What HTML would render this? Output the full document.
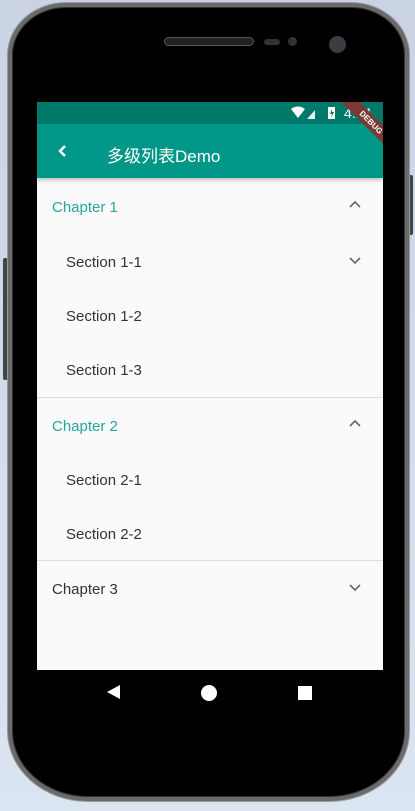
<!DOCTYPE html>
<html><head><meta charset="utf-8"><style>
*{margin:0;padding:0;box-sizing:border-box}
body{width:415px;height:811px;overflow:hidden;background:linear-gradient(#cad3e3,#dbe4f1);position:relative;font-family:"Liberation Sans","Noto Sans CJK SC",sans-serif}
.phone{position:absolute;left:8px;top:3px;width:401px;height:798px;background:#000;border-radius:58px 58px 80px 80px/52px 52px 70px 70px;border:4px solid #6a6a6a;box-shadow:0 0 0 1px #999,inset 0 0 0 1px #333}
.btnL{position:absolute;left:3px;top:258px;width:6px;height:122px;background:#444;border-radius:2px}
.btnR{position:absolute;left:408px;top:175px;width:5px;height:60px;background:#444;border-radius:2px}
.screen{position:absolute;left:37px;top:102px;width:346px;height:568px;background:#fafafa;overflow:hidden}
.status{height:22px;background:#00796b;position:relative}
.appbar{height:54px;background:#009688;position:relative;box-shadow:0 2px 4px rgba(0,0,0,.25);color:#fff}
.row{position:absolute;left:0;width:346px;font-size:15px;color:#333}
.chev{position:absolute;right:22px}
.div{position:absolute;left:0;width:346px;height:1px;background:#ddd}
.nav{position:absolute;left:37px;top:670px;width:346px;height:47px;background:#000}
</style></head><body>
<div class="btnL"></div><div class="btnR"></div>
<div class="phone"></div>
<div style="position:absolute;left:164px;top:37px;width:90px;height:9px;border-radius:5px;background:#222;border:1px solid #555"></div>
<div style="position:absolute;left:264px;top:39px;width:16px;height:6px;border-radius:3px;background:#333"></div>
<div style="position:absolute;left:288px;top:37px;width:9px;height:9px;border-radius:50%;background:#333"></div>
<div style="position:absolute;left:329px;top:36px;width:17px;height:17px;border-radius:50%;background:#3a3d42"></div>
<div class="screen">
 <div class="status">
  <svg style="position:absolute;left:254px;top:4px" width="60" height="14"><path d="M0 3 Q7 -2 14 3 L7 12Z" fill="#fff"/><path d="M16 13 L24 4 L24 13Z" fill="#fff" opacity=".9"/><rect x="37" y="1" width="7" height="12" fill="#fff"/><path d="M41 3 L39 8 L41 8 L40 12 L43 6 L41 6Z" fill="#00796b"/></svg>
  <span style="position:absolute;left:307px;top:3px;color:#fff;font-size:14px">4:14</span>
 </div>
 <div class="appbar">
  <svg style="position:absolute;left:20px;top:19px" width="12" height="16"><path d="M8 3 L3 8 L8 13" stroke="#fff" stroke-width="2.5" fill="none"/></svg>
  <span style="position:absolute;left:70px;top:18px;font-size:17px">多级列表Demo</span>
 </div>
 <div style="position:absolute;left:279px;top:14px;width:110px;height:13px;background:#7a3a33;transform:rotate(45deg);color:#fff;font-size:8px;font-weight:bold;text-align:center;line-height:13px">DEBUG</div>
 <div class="row" style="top:97px;left:15px;color:#26a69a">Chapter 1</div>
 <svg class="chev" style="top:98px" width="12" height="10"><path d="M1 7 L6 2 L11 7" stroke="#666" stroke-width="1.6" fill="none"/></svg>
 <div class="row" style="top:152px;left:29px">Section 1-1</div>
 <svg class="chev" style="top:154px" width="12" height="10"><path d="M1 2 L6 7 L11 2" stroke="#666" stroke-width="1.6" fill="none"/></svg>
 <div class="row" style="top:206px;left:29px">Section 1-2</div>
 <div class="row" style="top:260px;left:29px">Section 1-3</div>
 <div class="div" style="top:295px"></div>
 <div class="row" style="top:316px;left:15px;color:#26a69a">Chapter 2</div>
 <svg class="chev" style="top:317px" width="12" height="10"><path d="M1 7 L6 2 L11 7" stroke="#666" stroke-width="1.6" fill="none"/></svg>
 <div class="row" style="top:370px;left:29px">Section 2-1</div>
 <div class="row" style="top:424px;left:29px">Section 2-2</div>
 <div class="div" style="top:458px"></div>
 <div class="row" style="top:479px;left:15px">Chapter 3</div>
 <svg class="chev" style="top:481px" width="12" height="10"><path d="M1 2 L6 7 L11 2" stroke="#666" stroke-width="1.6" fill="none"/></svg>
</div>
<div class="nav">
 <svg style="position:absolute;left:69px;top:14px" width="16" height="16"><path d="M1 8 L14 1 L14 15Z" fill="#fff"/></svg>
 <div style="position:absolute;left:164px;top:15px;width:16px;height:16px;border-radius:50%;background:#fff"></div>
 <div style="position:absolute;left:261px;top:16px;width:14px;height:14px;background:#fff"></div>
</div>
</body></html>
